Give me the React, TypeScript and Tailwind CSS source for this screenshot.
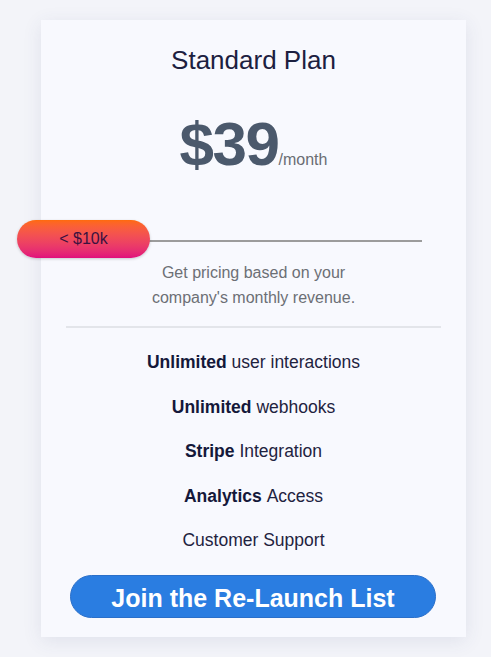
const features = [
  { bold: 'Unlimited', rest: 'user interactions' },
  { bold: 'Unlimited', rest: 'webhooks' },
  { bold: 'Stripe', rest: 'Integration' },
  { bold: 'Analytics', rest: 'Access' },
  { bold: '', rest: 'Customer Support' },
];

export default function App() {
  return (
    <div className="min-h-[657px] w-full bg-[#f3f4f9] pt-[20px] font-['Liberation_Sans',Arial,sans-serif]">
      <div className="ml-[41px] w-[425px] bg-[#f8f9fe] pt-[23px] pb-[19px] shadow-[0_4px_18px_rgba(60,70,120,0.10)]">
        <h2 className="text-center text-[26px] leading-[34px] text-[#1c2040]">Standard Plan</h2>

        <div className="mt-[35px] flex items-baseline justify-center">
          <span className="text-[62px] font-bold leading-[64px] tracking-[-1.5px] text-[#4b596c]">$39</span>
          <span className="text-[16px] text-[#6a6d73]">/month</span>
        </div>

        <div className="relative ml-[-24px] mt-[44px] h-[38px] w-[405px]">
          <div className="absolute left-[130px] right-0 top-[20px] h-[2px] bg-[#9c9c9c]" />
          <div className="absolute left-0 top-0 flex h-[38px] w-[133px] items-center justify-center rounded-full bg-gradient-to-b from-[#ff6a0a] to-[#e10c7c] text-[16px] text-[#3b1240] shadow-[0_1px_3px_rgba(0,0,0,0.2)]">
            &lt; $10k
          </div>
        </div>

        <p className="mx-auto mt-[2px] w-[220px] text-center text-[16px] leading-[25px] text-[#6c6f75]">
          Get pricing based on your company's monthly revenue.
        </p>

        <div className="mx-[25px] mt-[16px] h-[2px] bg-[#e3e5ea]" />

        <ul className="mt-[12px]">
          {features.map((f, i) => (
            <li key={i} className="text-center text-[17.5px] leading-[44.5px] text-[#1f2340]">
              {f.bold && <span className="font-bold text-[#14183a]">{f.bold} </span>}
              {f.rest}
            </li>
          ))}
        </ul>

        <button className="mx-[29px] mt-[12px] flex h-[43px] w-[366px] items-center justify-center rounded-full border border-[#2a6fc9] bg-[#2a7de1] pt-[5px] text-[25px] font-bold text-white">
          Join the Re-Launch List
        </button>
      </div>
    </div>
  );
}
